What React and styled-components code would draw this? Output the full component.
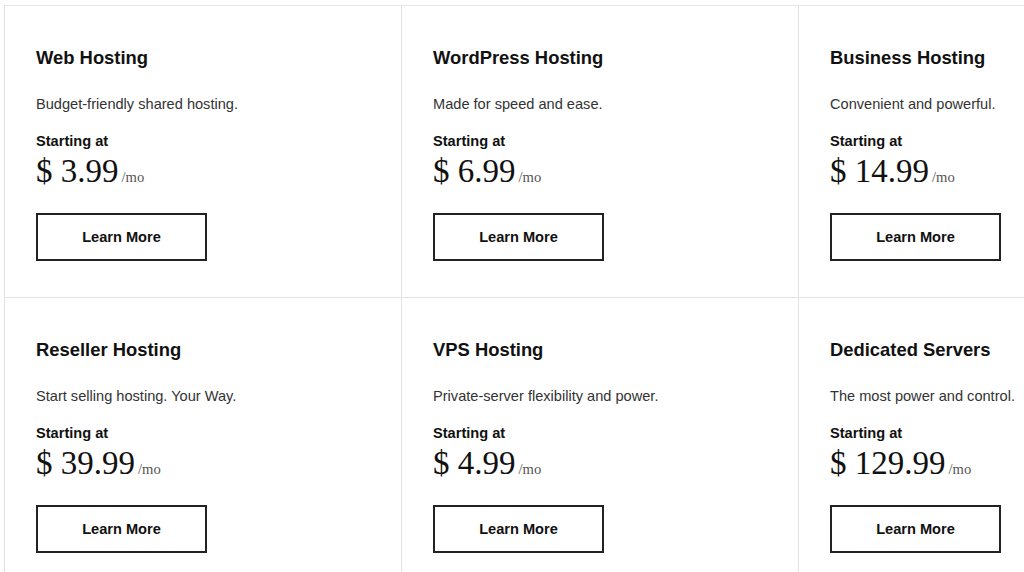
import styled, { createGlobalStyle } from "styled-components";

const GlobalStyle = createGlobalStyle`
    html, body {
        margin: 0;
        padding: 0;
        background: #fff;
        overflow: hidden;
    }
    body {
        font-family: "Liberation Sans", Arial, sans-serif;
        color: #222;
    }
`;

const plans = [
    { name: "Web Hosting", text: "Budget-friendly shared hosting.", price: "3.99" },
    { name: "WordPress Hosting", text: "Made for speed and ease.", price: "6.99" },
    { name: "Business Hosting", text: "Convenient and powerful.", price: "14.99" },
    { name: "Reseller Hosting", text: "Start selling hosting. Your Way.", price: "39.99" },
    { name: "VPS Hosting", text: "Private-server flexibility and power.", price: "4.99" },
    { name: "Dedicated Servers", text: "The most power and control.", price: "129.99" },
];

const Page = styled.div`
    padding: 5px 0 0 4px;
`;

const Grid = styled.div`
    display: grid;
    grid-template-columns: repeat(3, 397px);
    width: 1191px;
    border-top: 1px solid #e8e8e8;
`;

const Card = styled.div`
    box-sizing: border-box;
    height: 292px;
    padding: 41px 0 0 31px;
    border-left: 1px solid #e2e2e2;
    border-bottom: 1px solid #e2e2e2;
`;

const Title = styled.h3`
    margin: 0;
    font-size: 18.4px;
    line-height: 22px;
    font-weight: 700;
    color: #111;
`;

const Desc = styled.p`
    margin: 25px 0 0;
    font-size: 14.6px;
    line-height: 20px;
    color: #333;
`;

const Label = styled.div`
    margin-top: 17px;
    font-size: 14.6px;
    line-height: 20px;
    font-weight: 700;
    color: #111;
`;

const Price = styled.div`
    margin-top: 2px;
    font-family: "Liberation Serif", "Times New Roman", serif;
    font-size: 33px;
    line-height: 36px;
    color: #111;
`;

const Per = styled.span`
    margin-left: 3px;
    font-size: 14.6px;
    color: #555;
`;

const Button = styled.a`
    box-sizing: border-box;
    display: flex;
    align-items: center;
    justify-content: center;
    margin-top: 18px;
    width: 171px;
    height: 48px;
    border: 2px solid #222;
    font-size: 14.6px;
    font-weight: 700;
    color: #111;
    text-decoration: none;
    cursor: pointer;
`;

function Plan({ name, text, price }) {
    return (
        <Card>
            <Title>{name}</Title>
            <Desc>{text}</Desc>
            <Label>Starting at</Label>
            <Price>
                $ {price}
                <Per>/mo</Per>
            </Price>
            <Button href="#">Learn More</Button>
        </Card>
    );
}

export default function App() {
    return (
        <Page>
            <GlobalStyle />
            <Grid>
                {plans.map((plan) => (
                    <Plan key={plan.name} {...plan} />
                ))}
            </Grid>
        </Page>
    );
}
